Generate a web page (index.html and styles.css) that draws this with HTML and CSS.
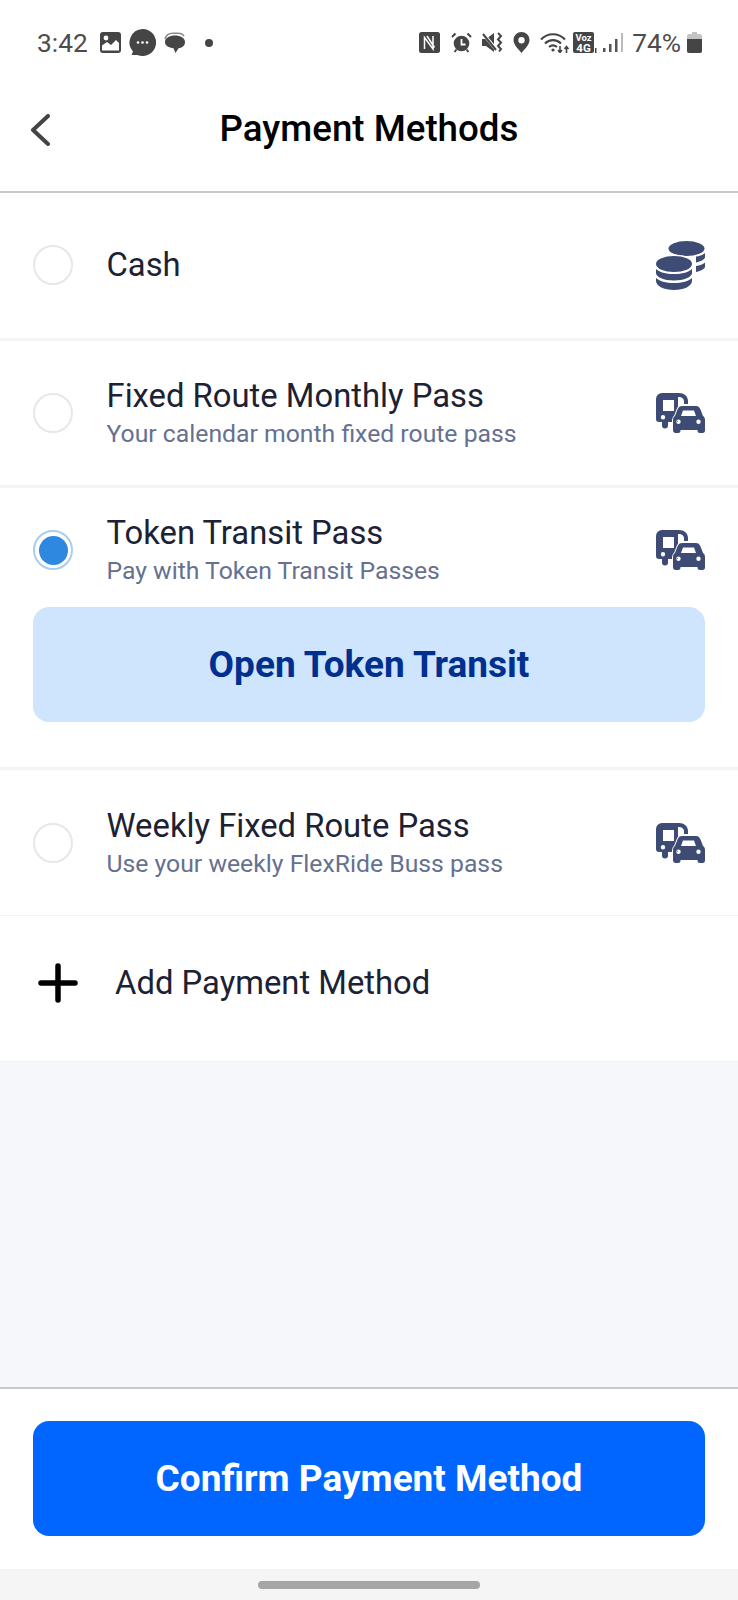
FILE: index.html
```html
<html>
<head>
    <meta http-equiv="Content-Type" content="text/html; charset=UTF-8" />
    <title>Payment Methods</title>
    <link rel="stylesheet" href="styles.css">
</head>
<body>

<div class="statusbar">
    <div class="status-group">
        <span class="clock">3:42</span>
        <svg class="st-image" viewBox="0 0 21 21"><path d="M3 0h15a3 3 0 0 1 3 3v15a3 3 0 0 1-3 3H3a3 3 0 0 1-3-3V3a3 3 0 0 1 3-3z" fill="#454545"/><path d="M2 18.500v-5l5-3.500 4 3 5-5 3 3v7.500z" fill="#fff"/><circle cx="6" cy="6" r="2.400" fill="#fff"/></svg>
        <svg class="st-chat" viewBox="0 0 27 27"><path d="M13.500 0a13.500 13.500 0 1 1-5 26H2.500l1.500-3.500A13.500 13.500 0 0 1 13.500 0z" fill="#454545"/><circle cx="9" cy="13.500" r="1.300" fill="#fff"/><circle cx="13.500" cy="13.500" r="1.300" fill="#fff"/><circle cx="18" cy="13.500" r="1.300" fill="#fff"/></svg>
        <svg class="st-bubbles" viewBox="0 0 21 21"><path d="M1 7C2 3 5 1.200 9 1.200h5c3 0 5 1 6 3" fill="none" stroke="#8a8a8a" stroke-width="1.500"/><path d="M11 3.500c5.500 0 10 2.500 10 6.500s-3.500 6-6.500 6.300L11.500 21l-2-4.800C5 15.800 1 14 1 10s4.500-6.500 10-6.500z" fill="#454545"/></svg>
        <span class="st-dot"></span>
    </div>
    <div class="status-group">
        <svg class="st-nfc" viewBox="0 0 21 21"><rect width="21" height="21" rx="2.500" fill="#454545"/><path d="M5.500 17V5.500L14 17V4M8 4l7.500 11.500" fill="none" stroke="#fff" stroke-width="1.500"/></svg>
        <svg class="st-alarm" viewBox="0 0 21 21"><circle cx="10.500" cy="11.500" r="7.800" fill="#454545"/><path d="M10.500 7v5.500h4" fill="none" stroke="#fff" stroke-width="1.800"/><path d="M1 5l3.500-3.500M20 5l-3.500-3.500M3.500 20l2-2.500M17.500 20l-2-2.500" stroke="#454545" stroke-width="2"/></svg>
        <svg class="st-mute" viewBox="0 0 21 21"><path d="M0 7h4l8-6v19l-8-6H0z" fill="#454545"/><path d="M1 1.500l14 17" stroke="#fff" stroke-width="3.500"/><path d="M1 2l13 16" stroke="#454545" stroke-width="2"/><path d="M16 1l3 3-3 3.500 3 3-3 3.500 3 3-2 2.500" fill="none" stroke="#454545" stroke-width="2"/></svg>
        <svg class="st-pin" viewBox="0 0 17 21"><path fill-rule="evenodd" d="M8.500 0A8 8 0 0 1 16.500 8c0 5-5 9-8 13-3-4-8-8-8-13A8 8 0 0 1 8.500 0zm0 5a3.200 3.200 0 1 0 0 6.400 3.200 3.200 0 0 0 0-6.400z" fill="#454545"/></svg>
        <svg class="st-wifi" viewBox="0 0 30 21"><path d="M1 7.500c6.500-7 17.500-7 24 0M5 11.500c4.500-4.500 11.500-4.500 16 0M9 15c2.500-2 5.500-2 8 0" fill="none" stroke="#454545" stroke-width="2.200"/><circle cx="13" cy="18" r="1.600" fill="#454545"/><path d="M20 14v6M18 18l2 2.500 2-2.500M26.500 21v-6M24.500 17l2-2.500 2 2.500" fill="none" stroke="#454545" stroke-width="1.600"/></svg>
        <svg class="st-volte" viewBox="0 0 24 21"><rect width="21" height="21" rx="2" fill="#454545"/><text x="10.500" y="9" class="volte-text">Voz</text><text x="10.500" y="19.500" class="volte-text volte-big">4G</text><rect x="22" y="16" width="1.500" height="5" fill="#454545"/></svg>
        <svg class="st-signal" viewBox="0 0 20 21"><rect x="0" y="16" width="2.500" height="4" fill="#555"/><rect x="6" y="12" width="2.500" height="8" fill="#555"/><rect x="12" y="7" width="2.500" height="13" fill="#555"/><rect x="18" y="1" width="2" height="19" fill="#bbb"/></svg>
        <span class="battery-text">74%</span>
        <svg class="st-battery" viewBox="0 0 15 21"><path d="M5 0h5v2h3a2 2 0 0 1 2 2v15a2 2 0 0 1-2 2H2a2 2 0 0 1-2-2V4a2 2 0 0 1 2-2h3z" fill="#c4c4c4"/><path d="M0 7h15v12a2 2 0 0 1-2 2H2a2 2 0 0 1-2-2z" fill="#454545"/></svg>
    </div>
</div>

<div class="topbar">
    <svg class="back" viewBox="0 0 20 32"><path d="M18 2L3 16l15 14" fill="none" stroke="#444" stroke-width="4" stroke-linecap="round" stroke-linejoin="round"/></svg>
    <div class="title">Payment Methods</div>
</div>

<div class="row row-cash">
    <span class="radio"></span>
    <div class="row-text"><div class="name">Cash</div></div>
    <svg class="row-icon" viewBox="0 0 49 49"><use href="#coins"/></svg>
</div>

<div class="row row-fixed">
    <span class="radio"></span>
    <div class="row-text">
        <div class="name">Fixed Route Monthly Pass</div>
        <div class="sub">Your calendar month fixed route pass</div>
    </div>
    <svg class="row-icon vehicles" viewBox="0 0 49 40"><use href="#vehicles"/></svg>
</div>

<div class="row-open">
    <div class="row row-selected">
        <span class="radio radio-on"></span>
        <div class="row-text">
            <div class="name">Token Transit Pass</div>
            <div class="sub">Pay with Token Transit Passes</div>
        </div>
        <svg class="row-icon vehicles" viewBox="0 0 49 40"><use href="#vehicles"/></svg>
    </div>
    <div class="open-btn">Open Token Transit</div>
</div>

<div class="row row-weekly">
    <span class="radio"></span>
    <div class="row-text">
        <div class="name">Weekly Fixed Route Pass</div>
        <div class="sub">Use your weekly FlexRide Buss pass</div>
    </div>
    <svg class="row-icon vehicles" viewBox="0 0 49 40"><use href="#vehicles"/></svg>
</div>

<div class="add-row">
    <svg class="plus" viewBox="0 0 40 40"><path d="M20 3v34M3 20h34" stroke="#000" stroke-width="5.500" stroke-linecap="round"/></svg>
    <div class="name">Add Payment Method</div>
</div>

<div class="spacer"></div>

<div class="footer">
    <div class="confirm-btn">Confirm Payment Method</div>
</div>

<div class="navbar"><span class="handle"></span></div>

<svg class="defs" width="0" height="0">
    <defs>
        <g id="coins" fill="#3e4c75">
            <ellipse cx="30.500" cy="7.500" rx="18" ry="7.500"/>
            <path d="M40 15.500c4-.500 7-1.500 9-3.500v4c0 2-3 4-9 5.500zM40 25c4-.500 7-1.500 9-3.500v4c0 2-3 4-9 5.500z"/>
            <ellipse cx="18" cy="23" rx="19.500" ry="9.500" fill="#fff"/>
            <ellipse cx="18" cy="23" rx="18" ry="8"/>
            <path d="M0 28c3 3 10 5 18 5s15-2 18-5v4c0 4-8 7.500-18 7.500S0 36 0 32zM0 37c3 3 10 5 18 5s15-2 18-5v3c0 5-8 9-18 9S0 45 0 40z"/>
        </g>
        <g id="vehicles" fill="#3e4c75" fill-rule="evenodd">
            <path d="M6 0h17c5 0 9 3 9 8v3h-4V8c0-2-2-4-5-4h-1v25H12v3.500a3 3 0 0 1-6 0V29H3a3 3 0 0 1-3-3V6a6 6 0 0 1 6-6zm1 7v11h11V7zm0 15a2.200 2.200 0 1 0 0 4.400 2.200 2.200 0 0 0 0-4.400z"/>
            <path stroke="#fff" stroke-width="2" paint-order="stroke" d="M26 13h14c2 0 3.500 1 4.500 3.500L47 23c1.500 1 2 2.500 2 4v10.500a2.500 2.500 0 0 1-2 2.500h-3a2.500 2.500 0 0 1-2.500-2.500V37h-17v.5A2.500 2.500 0 0 1 22 40h-3a2.500 2.500 0 0 1-2-2.500V27c0-1.500.500-3 2-4l2.500-6.500C22.500 14 24 13 26 13zm1 4.500l-2 5.500h15l-2-5.500zm-4.500 9a2.200 2.200 0 1 0 0 4.400 2.200 2.200 0 0 0 0-4.400zm20 0a2.200 2.200 0 1 0 0 4.400 2.200 2.200 0 0 0 0-4.400z"/>
        </g>
    </defs>
</svg>

</body>
</html>
```

FILE: styles.css
```css
body {
    margin: 0;
    width: 738px;
    height: 1600px;
    display: flex;
    flex-direction: column;
    background: #fff;
    font-family: Roboto, "Liberation Sans", sans-serif;
    color: #1c2233;
    overflow: hidden;
}

/* status bar */
.statusbar {
    height: 85px;
    display: flex;
    justify-content: space-between;
    align-items: center;
    padding: 0 36px 0 37px;
    color: #4d4d4d;
    flex: none;
}
.status-group {
    display: flex;
    align-items: center;
}
.clock {
    font-size: 26.300px;
    width: 63px;
}
.battery-text {
    font-size: 26.300px;
    margin-left: 9px;
}
.st-image { width: 21px; height: 21px; }
.st-chat { width: 27px; height: 27px; margin-left: 8px; }
.st-bubbles { width: 21px; height: 21px; margin-left: 8px; }
.st-dot {
    width: 8px;
    height: 8px;
    border-radius: 50%;
    background: #454545;
    margin-left: 20px;
}
.st-nfc { width: 21px; height: 21px; }
.st-alarm { width: 21px; height: 21px; margin-left: 11px; }
.st-mute { width: 21px; height: 21px; margin-left: 10px; }
.st-pin { width: 17px; height: 21px; margin-left: 10px; }
.st-wifi { width: 30px; height: 21px; margin-left: 10px; }
.st-volte { width: 24px; height: 21px; margin-left: 3px; }
.volte-text {
    font-size: 9.500px;
    font-weight: 700;
    fill: #fff;
    text-anchor: middle;
}
.volte-big {
    font-size: 11.500px;
}
.st-signal { width: 20px; height: 21px; margin-left: 6px; }
.st-battery { width: 15px; height: 21px; margin-left: 6px; }

/* title bar */
.topbar {
    height: 106px;
    border-bottom: 2px solid #c9c9cc;
    display: flex;
    align-items: center;
    justify-content: center;
    position: relative;
    flex: none;
}
.back {
    position: absolute;
    left: 30px;
    top: 29px;
    width: 20px;
    height: 32px;
}
.title {
    font-size: 36.700px;
    font-weight: 500;
    color: #000;
    margin-top: -19px;
}

/* payment rows */
.row {
    display: flex;
    align-items: center;
    height: 145px;
    padding: 0 33px;
    box-sizing: border-box;
    border-bottom: 3px solid #f3f4f6;
    flex: none;
}
.row-cash {
    height: 148px;
    padding-bottom: 1px;
}
.row-fixed {
    height: 147px;
}
.row-weekly {
    height: 146px;
    border-bottom: 1px solid #f1f2f5;
}
.radio {
    width: 40px;
    height: 40px;
    box-sizing: border-box;
    border: 2px solid #e6e7ea;
    border-radius: 50%;
    margin-right: 34px;
    flex: none;
}
.radio-on {
    border-color: #a9cdee;
    display: flex;
    align-items: center;
    justify-content: center;
}
.radio-on::after {
    content: "";
    width: 29px;
    height: 29px;
    border-radius: 50%;
    background: #2f88e0;
}
.row-text {
    flex: 1;
    margin-left: -0.5px;
    padding-top: 2px;
}
.row-cash .row-text {
    padding-top: 0;
}
.name {
    font-size: 32.800px;
    line-height: 40px;
    color: #1c2233;
}
.sub {
    font-size: 24.750px;
    line-height: 36px;
    color: #66708f;
}
.row-icon {
    width: 49px;
    height: 49px;
    flex: none;
}
.vehicles {
    height: 40px;
}

/* selected row with its button */
.row-open {
    height: 282px;
    box-sizing: border-box;
    padding-bottom: 45px;
    border-bottom: 3px solid #f3f4f6;
    flex: none;
}
.row-selected {
    height: 119px;
    padding-top: 5px;
    border-bottom: none;
}
.open-btn {
    margin: 0 33px;
    height: 115px;
    border-radius: 16px;
    background: #cfe4fd;
    color: #00308f;
    font-size: 37px;
    font-weight: 700;
    display: flex;
    align-items: center;
    justify-content: center;
}

.add-row {
    height: 145px;
    box-sizing: border-box;
    display: flex;
    align-items: center;
    padding: 0 0 12px 38px;
    flex: none;
}
.plus {
    width: 40px;
    height: 40px;
    margin-right: 37px;
}

.spacer {
    flex: 1;
    background: #f5f7fb;
    border-top: 1px solid #f1f2f5;
}

.footer {
    height: 182px;
    box-sizing: border-box;
    border-top: 2px solid #c9c9cc;
    padding: 32px 33px 0;
    flex: none;
}
.confirm-btn {
    height: 115px;
    border-radius: 16px;
    background: #0066ff;
    color: #fff;
    font-size: 37px;
    font-weight: 700;
    display: flex;
    align-items: center;
    justify-content: center;
}

.navbar {
    height: 31px;
    background: #f5f5f5;
    display: flex;
    justify-content: center;
    align-items: center;
    flex: none;
}
.handle {
    width: 222px;
    height: 8px;
    border-radius: 4px;
    background: #a6a6a6;
}
.defs {
    position: absolute;
}
```
